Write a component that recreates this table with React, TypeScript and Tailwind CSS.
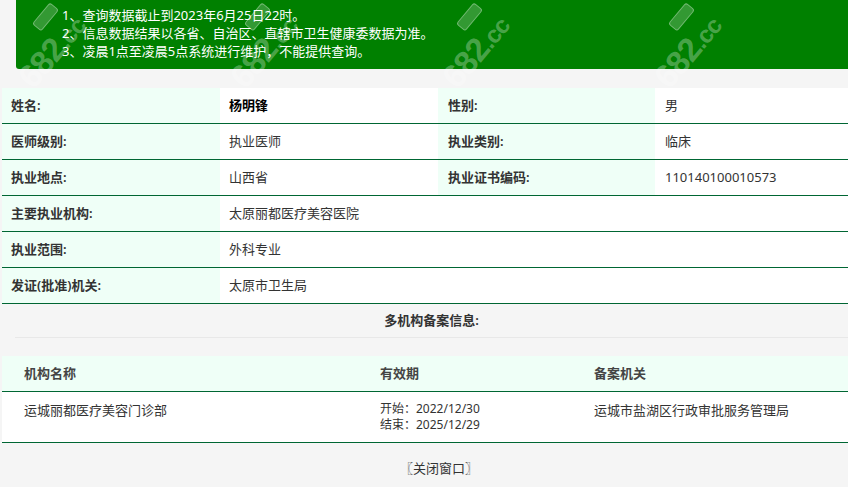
import React from "react";

const font = { fontFamily: '"Noto Sans", "Noto Sans CJK SC", sans-serif' };

function Watermark({ left, top }: { left: number; top: number }) {
  return (
    <div
      className="pointer-events-none absolute select-none"
      style={{ left, top }}
    >
      <div className="relative h-[84px] w-[84px] -rotate-[50deg]">
        <div className="absolute left-[2px] top-[26px] text-[33px] font-black leading-none tracking-tight text-white/30 [font-family:'Liberation_Sans',sans-serif]">
          682<span className="text-[24px]">.cc</span>
        </div>
        <div className="absolute left-[52px] top-[10px] h-[12px] w-[28px] rounded-[3px] border border-white/30 bg-white/20" />
      </div>
    </div>
  );
}

const rows: { label: string; value: string; bold?: boolean; label2?: string; value2?: string }[] = [
  { label: "姓名:", value: "杨明锋", bold: true, label2: "性别:", value2: "男" },
  { label: "医师级别:", value: "执业医师", label2: "执业类别:", value2: "临床" },
  { label: "执业地点:", value: "山西省", label2: "执业证书编码:", value2: "110140100010573" },
  { label: "主要执业机构:", value: "太原丽都医疗美容医院" },
  { label: "执业范围:", value: "外科专业" },
  { label: "发证(批准)机关:", value: "太原市卫生局" },
];

export default function App() {
  return (
    <div className="relative h-[487px] w-[848px] overflow-hidden bg-[#f5f5f5] text-[13px] text-[#333]" style={font}>
      {/* notice */}
      <div className="ml-4 rounded-bl-[3px] bg-[#008000] pb-[9px] pl-[46px] pt-[6px] leading-[18px] text-white">
        <p>1、查询数据截止到2023年6月25日22时。</p>
        <p>2、信息数据结果以各省、自治区、直辖市卫生健康委数据为准。</p>
        <p>3、凌晨1点至凌晨5点系统进行维护，不能提供查询。</p>
      </div>

      {/* doctor info */}
      <div className="ml-[2px] mt-[19px]">
        {rows.map((r) => (
          <div key={r.label} className="flex h-[36px] border-b border-[#006633]">
            <div className="flex w-[218px] items-center bg-[#effff7] pl-[9px] font-semibold">{r.label}</div>
            <div className={`flex items-center pl-[9px] ${r.label2 ? "w-[218px]" : "flex-1"} ${r.bold ? "font-bold text-black" : ""} bg-white`}>
              {r.value}
            </div>
            {r.label2 && (
              <>
                <div className="flex w-[217px] items-center bg-[#effff7] pl-[10px] font-semibold">{r.label2}</div>
                <div className="flex flex-1 items-center bg-white pl-[10px]">{r.value2}</div>
              </>
            )}
          </div>
        ))}
      </div>

      {/* multi-institution */}
      <div className="ml-[15px] flex h-[34px] items-center justify-center border-b border-[#e8e8e8] font-semibold">
        多机构备案信息:
      </div>

      <div className="ml-[2px] mt-[18px]">
        <div className="flex h-[36px] items-center border-b border-[#006633] bg-[#effff7] font-semibold text-[#444]">
          <div className="w-[356px] pl-[22px]">机构名称</div>
          <div className="w-[214px] pl-[22px]">有效期</div>
          <div className="flex-1 pl-[22px]">备案机关</div>
        </div>
        <div className="flex h-[51px] border-b border-[#006633] bg-white pt-[9px]">
          <div className="w-[356px] pl-[22px] leading-[18px]">运城丽都医疗美容门诊部</div>
          <div className="w-[214px] pl-[22px] text-[12px] leading-[16px]">
            <p>开始：2022/12/30</p>
            <p>结束：2025/12/29</p>
          </div>
          <div className="flex-1 pl-[22px] leading-[18px]">运城市盐湖区行政审批服务管理局</div>
        </div>
      </div>

      <div className="mt-[16px] pl-[30px] text-center leading-[18px]">
        <a className="cursor-pointer text-[#333]">〖关闭窗口〗</a>
      </div>

      {[20, 232, 444, 656].map((x) => (
        <Watermark key={x} left={x - 12} top={10} />
      ))}
    </div>
  );
}
